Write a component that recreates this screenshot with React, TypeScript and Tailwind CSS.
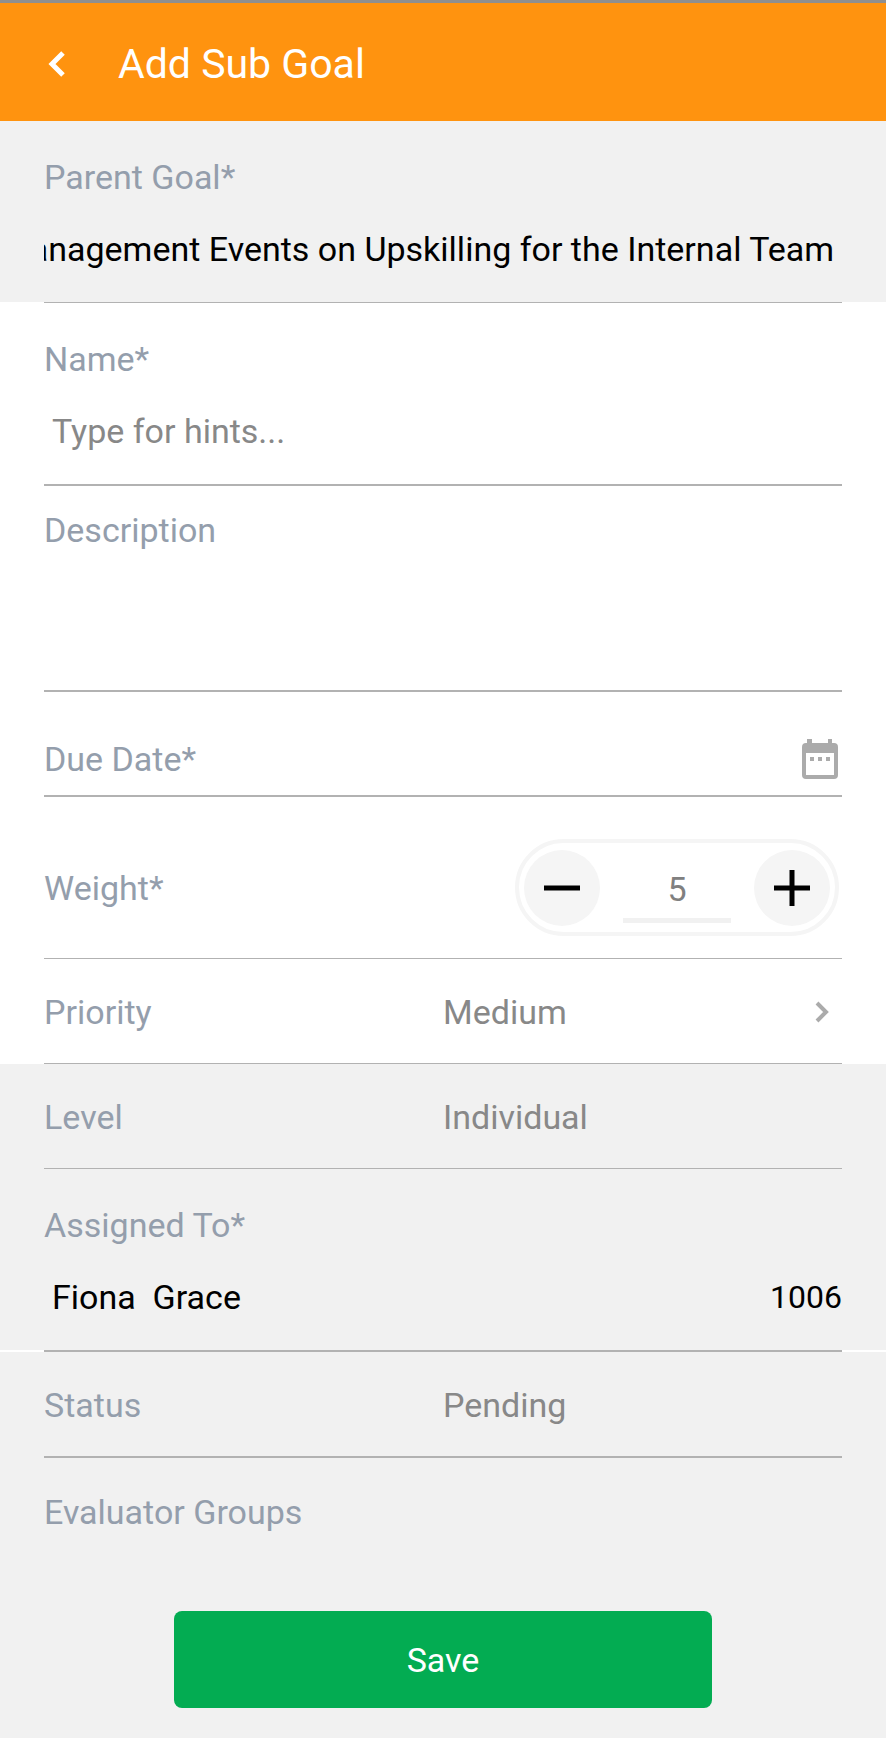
import React, { useEffect, useRef, useState } from "react";

const CalendarIcon = () => (
  <svg width="36" height="40" viewBox="0 0 36 40" fill="#ababab">
    <path
      fillRule="evenodd"
      d="M5 0h5v4h16V0h4v4h2a4 4 0 0 1 4 4v28a4 4 0 0 1-4 4H4a4 4 0 0 1-4-4V8a4 4 0 0 1 4-4h1zM4 14v22h28V14z"
    />
    <path d="M8 18h4v4H8zM16 18h4v4h-4zM24 18h4v4h-4z" />
  </svg>
);

const BackIcon = () => (
  <svg width="18" height="26" viewBox="0 0 18 26" fill="none" stroke="#fff" strokeWidth="5">
    <path d="M15 2L4 13l11 11" />
  </svg>
);

const ChevronIcon = () => (
  <svg width="15" height="22" viewBox="0 0 15 22" fill="none" stroke="#ababab" strokeWidth="4">
    <path d="M2 2l9 9-9 9" />
  </svg>
);

const Divider = ({ thick }: { thick?: boolean }) => (
  <div className={`mx-11 bg-[#b2b2b2] ${thick ? "h-0.5" : "h-px"}`} />
);

const labelClass = "block text-[#949eac]";

const InfoRow = ({ label, value }: { label: string; value: string }) => (
  <div className="mx-11 pt-[33px] pb-[31px] grid grid-cols-2">
    <div className="text-[#949eac]">{label}</div>
    <div className="text-[#888]">{value}</div>
  </div>
);

const App = () => {
  const parentRef = useRef<HTMLInputElement>(null);
  const [name, setName] = useState("");
  const [description, setDescription] = useState("");
  const [weight, setWeight] = useState(5);
  const [priority, setPriority] = useState("Medium");

  // long parent goals stay scrolled to their end
  useEffect(() => {
    if (parentRef.current) {
      parentRef.current.scrollLeft = parentRef.current.scrollWidth;
    }
  }, []);

  return (
    <div className="min-h-screen flex flex-col bg-white font-[Roboto,'Noto_Sans',sans-serif] text-[34px] leading-10">
      <header className="flex items-center h-[121px] pt-1 pl-12 bg-[#ff930f] border-t-3 border-[#8f8f8f]">
        <button type="button" aria-label="Back" className="mr-[52px]">
          <BackIcon />
        </button>
        <h1 className="text-[41px] leading-[48px] text-white">Add Sub Goal</h1>
      </header>

      <div className="px-11 pt-9 pb-[33px] bg-[#f1f1f1]">
        <label htmlFor="parent" className={labelClass}>
          Parent Goal*
        </label>
        <div className="mt-8 pr-2">
          <input
            id="parent"
            ref={parentRef}
            readOnly
            className="block w-full h-10 text-black outline-none"
            value="Management Events on Upskilling for the Internal Team"
          />
        </div>
      </div>
      <Divider />

      <div className="px-11 pt-9 pb-[33px]">
        <label htmlFor="name" className={labelClass}>
          Name*
        </label>
        <input
          id="name"
          className="block w-full h-10 mt-8 px-2 text-black placeholder:text-[#888] outline-none"
          placeholder="Type for hints..."
          value={name}
          onChange={(e) => setName(e.target.value)}
        />
      </div>
      <Divider thick />

      <div className="px-11 pt-6">
        <label htmlFor="description" className={labelClass}>
          Description
        </label>
        <textarea
          id="description"
          className="block w-full h-[140px] px-2 text-black resize-none outline-none"
          value={description}
          onChange={(e) => setDescription(e.target.value)}
        />
      </div>
      <Divider thick />

      <div className="flex items-center justify-between mx-11 pt-[47px] pb-4">
        <div className="text-[#949eac]">Due Date*</div>
        <button type="button" aria-label="Pick due date" className="mr-1">
          <CalendarIcon />
        </button>
      </div>
      <Divider thick />

      <div className="flex items-center justify-between mx-11 pt-[42px] pb-[22px]">
        <label htmlFor="weight" className={labelClass}>
          Weight*
        </label>
        <div className="flex items-center justify-between w-[324px] h-[97px] mr-[3px] px-[5px] border-4 border-[#f5f5f5] rounded-full">
          <button
            type="button"
            aria-label="Decrease weight"
            className="flex items-center justify-center size-[76px] rounded-full bg-[#f5f5f5]"
            onClick={() => setWeight(weight - 1)}
          >
            <svg width="36" height="36" viewBox="0 0 36 36">
              <path d="M0 18h36" stroke="#000" strokeWidth="5" />
            </svg>
          </button>
          <input
            id="weight"
            className="w-[108px] h-[70px] pt-3 pb-1 text-center text-[#808080] border-b-5 border-[#f1f1f1] outline-none"
            value={weight}
            onChange={(e) => setWeight(Number(e.target.value) || 0)}
          />
          <button
            type="button"
            aria-label="Increase weight"
            className="flex items-center justify-center size-[76px] rounded-full bg-[#f5f5f5]"
            onClick={() => setWeight(weight + 1)}
          >
            <svg width="36" height="36" viewBox="0 0 36 36">
              <path d="M0 18h36M18 0v36" stroke="#000" strokeWidth="5" />
            </svg>
          </button>
        </div>
      </div>
      <Divider />

      <div className="mx-11 pt-[33px] pb-[31px] grid grid-cols-2">
        <label htmlFor="priority" className={labelClass}>
          Priority
        </label>
        <div className="flex items-center pr-3">
          <select
            id="priority"
            className="flex-1 h-10 appearance-none text-[#888] outline-none"
            value={priority}
            onChange={(e) => setPriority(e.target.value)}
          >
            <option>Low</option>
            <option>Medium</option>
            <option>High</option>
          </select>
          <ChevronIcon />
        </div>
      </div>
      <Divider />

      <div className="bg-[#f1f1f1]">
        <InfoRow label="Level" value="Individual" />
        <Divider />
        <div className="px-11 pt-9 pb-[33px]">
          <div className="text-[#949eac]">Assigned To*</div>
          <div className="flex justify-between mt-8 pl-2 text-black">
            <span className="whitespace-pre">Fiona  Grace</span>
            <span className="text-[32px]">1006</span>
          </div>
        </div>
      </div>
      <Divider thick />

      <div className="flex-1 bg-[#f1f1f1]">
        <InfoRow label="Status" value="Pending" />
        <Divider thick />
        <div className="mx-11 pt-[34px] text-[#949eac]">Evaluator Groups</div>
        <div className="flex justify-center pt-[79px] pb-[29px]">
          <button type="button" className="w-[538px] h-[97px] rounded-lg bg-[#03ac52] text-white">
            Save
          </button>
        </div>
      </div>
    </div>
  );
};

export default App;
